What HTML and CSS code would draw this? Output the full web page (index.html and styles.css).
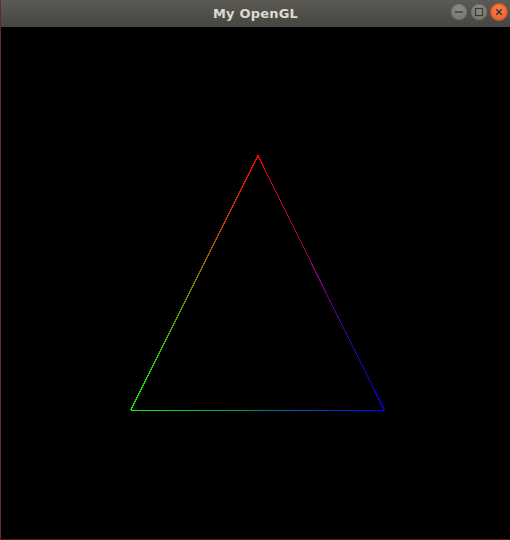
FILE: index.html
```html
<!DOCTYPE html>
<html>
<head>
<meta charset="utf-8">
<link rel="stylesheet" href="styles.css">
</head>
<body>
<div class="window">
  <div class="titlebar">
    <span class="title">My OpenGL</span>
    <div class="controls">
      <span class="btn btn-min"><svg width="18" height="18" viewBox="0 0 18 18"><line x1="5" y1="9" x2="13" y2="9" stroke="#3b3a36" stroke-width="1.4"/></svg></span>
      <span class="btn btn-max"><svg width="18" height="18" viewBox="0 0 18 18"><rect x="5.5" y="5.5" width="7" height="7" fill="none" stroke="#3b3a36" stroke-width="1.2"/></svg></span>
      <span class="btn btn-close"><svg width="18" height="18" viewBox="0 0 18 18"><path d="M6.3 6.3 L11.7 11.7 M11.7 6.3 L6.3 11.7" stroke="#3a2a22" stroke-width="1.3"/></svg></span>
    </div>
  </div>
  <div class="canvas">
    <svg class="gl" width="509" height="512" viewBox="1 27 509 512">
      <defs>
        <linearGradient id="gLeft" gradientUnits="userSpaceOnUse" x1="258" y1="155.5" x2="130.5" y2="410.5">
          <stop offset="0" stop-color="#ff0000"/>
          <stop offset="1" stop-color="#00ff00"/>
        </linearGradient>
        <linearGradient id="gRight" gradientUnits="userSpaceOnUse" x1="258" y1="155.5" x2="384.5" y2="410.5">
          <stop offset="0" stop-color="#ff0000"/>
          <stop offset="1" stop-color="#0000ff"/>
        </linearGradient>
        <linearGradient id="gBottom" gradientUnits="userSpaceOnUse" x1="130.5" y1="410.5" x2="384.5" y2="410.5">
          <stop offset="0" stop-color="#00ff00"/>
          <stop offset="1" stop-color="#0000ff"/>
        </linearGradient>
      </defs>
      <g shape-rendering="crispEdges">
        <line x1="258" y1="155.5" x2="130.5" y2="410.5" stroke="url(#gLeft)" stroke-width="1"/>
        <line x1="258" y1="155.5" x2="384.5" y2="410.5" stroke="url(#gRight)" stroke-width="1"/>
        <line x1="130.5" y1="410.5" x2="384.5" y2="410.5" stroke="url(#gBottom)" stroke-width="1"/>
      </g>
    </svg>
  </div>
</div>
</body>
</html>
```
FILE: styles.css
```css
html, body {
  margin: 0;
  padding: 0;
  background: #000;
}
.window {
  width: 510px;
  height: 540px;
  display: flex;
  flex-direction: column;
  overflow: hidden;
}
.titlebar {
  position: relative;
  height: 27px;
  flex: 0 0 27px;
  background: linear-gradient(#5c5a54, #47453f);
  border-left: 1px solid #6e2433;
  display: flex;
  align-items: center;
  justify-content: center;
  box-sizing: border-box;
}
.title {
  font-family: "DejaVu Sans", "Open Sans", sans-serif;
  font-weight: bold;
  font-size: 13px;
  color: #dedad3;
  letter-spacing: 0.2px;
  margin-top: -1px;
}
.controls {
  position: absolute;
  right: 2px;
  top: 3px;
  display: flex;
  gap: 2px;
}
.btn {
  width: 18px;
  height: 18px;
  border-radius: 50%;
  display: block;
}
.btn svg {
  display: block;
}
.btn-min, .btn-max {
  background: radial-gradient(circle at 50% 35%, #8f8d87, #6c6a64);
  box-shadow: inset 0 0 0 1px #4a4843;
}
.btn-close {
  background: radial-gradient(circle at 50% 35%, #f5804f, #e45a2a);
  box-shadow: inset 0 0 0 1px #b5461f;
}
.canvas {
  flex: 1;
  background: #000;
  border-left: 1px solid #6e2433;
  border-bottom: 1px solid #4a1a26;
}
.gl {
  display: block;
}
```
